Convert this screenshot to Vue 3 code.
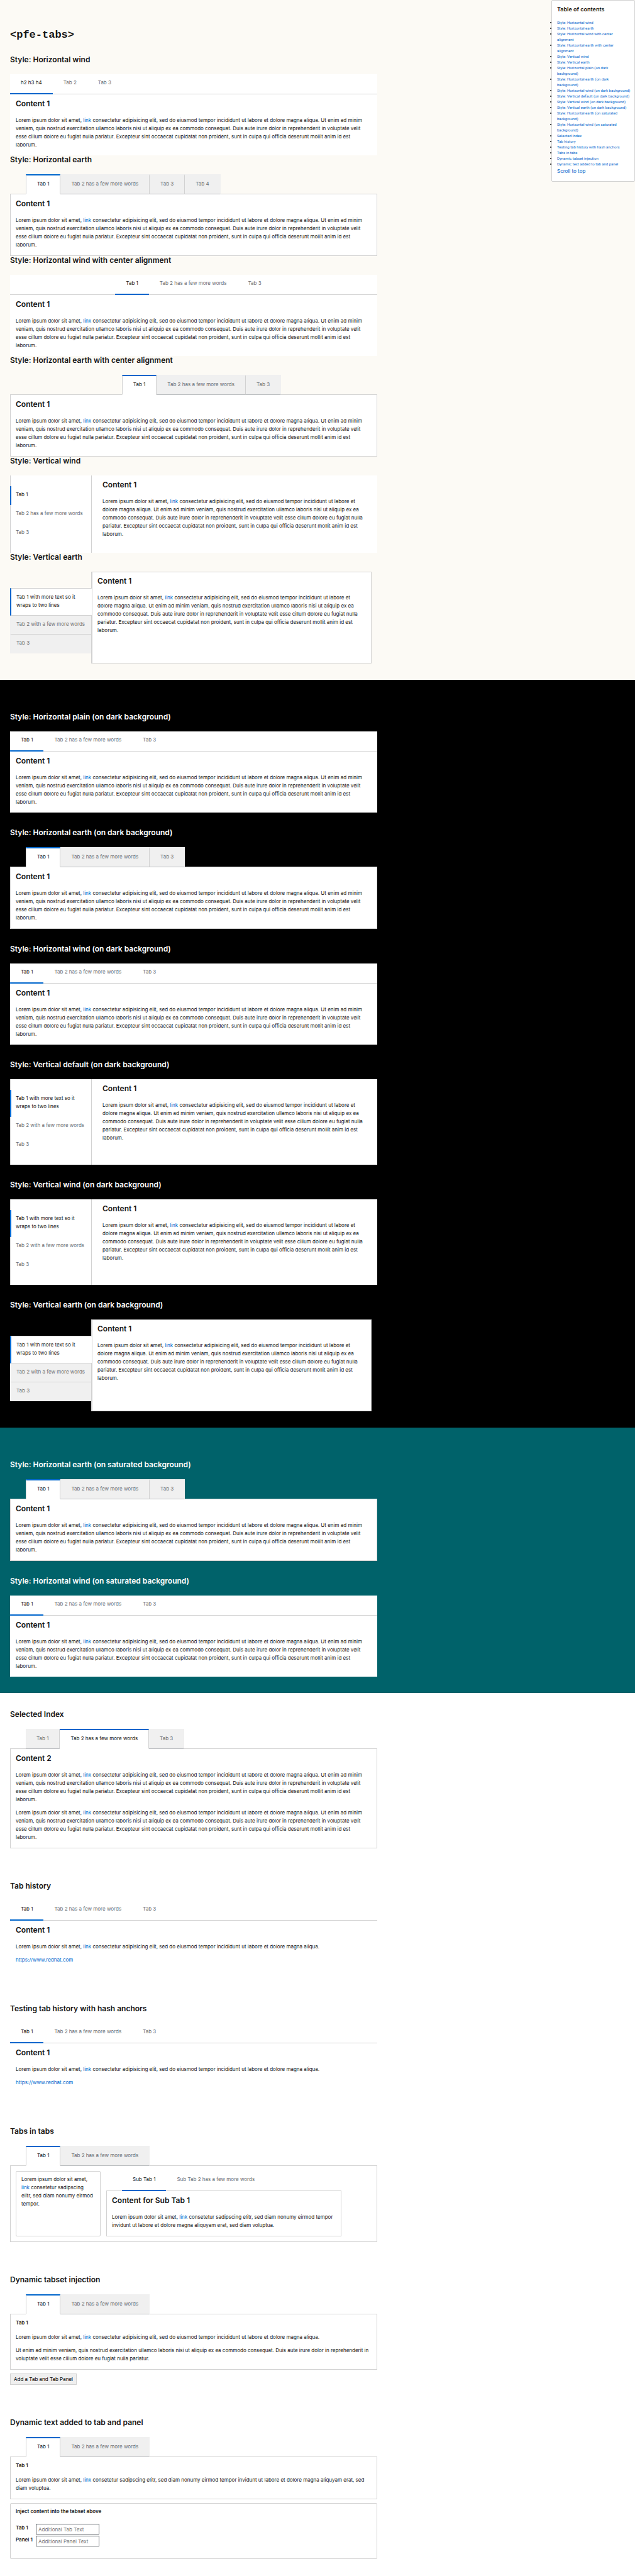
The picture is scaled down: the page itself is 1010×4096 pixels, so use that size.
<script setup>
const few = 'Tab 2 has a few more words'
const horizontal = ['Tab 1', few, 'Tab 3']
const vertical = ['Tab 1 with more text so it wraps to two lines', 'Tab 2 with a few more words', 'Tab 3']

const tail = 'consectetur adipisicing elit, sed do eiusmod tempor incididunt ut labore et dolore magna aliqua.'
const long = tail + ' Ut enim ad minim veniam, quis nostrud exercitation ullamco laboris nisi ut aliquip ex ea commodo consequat. Duis aute irure dolor in reprehenderit in voluptate velit esse cillum dolore eu fugiat nulla pariatur. Excepteur sint occaecat cupidatat non proident, sunt in culpa qui officia deserunt mollit anim id est laborum.'

const demo = (title, look, tabs, extra = {}) => ({
  title, look, tabs, active: 0, heading: 'Content 1', paragraphs: [long], ...extra
})

const bands = [
  {
    tone: 'light',
    demos: [
      demo('Style: Horizontal wind', 'wind', ['h2 h3 h4', 'Tab 2', 'Tab 3']),
      demo('Style: Horizontal earth', 'earth', [...horizontal, 'Tab 4']),
      demo('Style: Horizontal wind with center alignment', 'wind center', horizontal),
      demo('Style: Horizontal earth with center alignment', 'earth center', horizontal),
      demo('Style: Vertical wind', 'vertical wind', horizontal),
      demo('Style: Vertical earth', 'vertical earth', vertical)
    ]
  },
  {
    tone: 'dark',
    demos: [
      demo('Style: Horizontal plain (on dark background)', 'wind', horizontal),
      demo('Style: Horizontal earth (on dark background)', 'earth', horizontal),
      demo('Style: Horizontal wind (on dark background)', 'wind', horizontal),
      demo('Style: Vertical default (on dark background)', 'vertical wind', vertical),
      demo('Style: Vertical wind (on dark background)', 'vertical wind', vertical),
      demo('Style: Vertical earth (on dark background)', 'vertical earth', vertical)
    ]
  },
  {
    tone: 'saturated',
    demos: [
      demo('Style: Horizontal earth (on saturated background)', 'earth', horizontal),
      demo('Style: Horizontal wind (on saturated background)', 'wind', horizontal)
    ]
  },
  {
    tone: 'plain',
    demos: [
      demo('Selected Index', 'earth', horizontal, { active: 1, heading: 'Content 2', paragraphs: [long, long] }),
      demo('Tab history', 'wind history', horizontal, { paragraphs: [tail], url: true }),
      demo('Testing tab history with hash anchors', 'wind history', horizontal, { paragraphs: [tail], url: true })
    ]
  }
]

const slug = (text) => text.toLowerCase().replace(/[^a-z0-9]+/g, '-').replace(/-$/, '')

const contents = [
  ...bands.flatMap((band) => band.demos.map((d) => d.title)),
  'Tabs in tabs',
  'Dynamic tabset injection',
  'Dynamic text added to tab and panel'
].map((title) => ({
  title,
  wraps: /center alignment|saturated|Horizontal (plain|earth) \(/.test(title)
}))
</script>

<template>
  <div id="top" class="page">
    <nav class="toc" aria-labelledby="toc-title">
      <h2 id="toc-title" class="toc-title">Table of contents</h2>
      <ul class="toc-list">
        <li v-for="item in contents" :key="item.title" :class="{ single: !item.wraps }">
          <a :href="'#' + slug(item.title)">{{ item.title }}</a>
        </li>
      </ul>
      <a class="toc-top" href="#top">Scroll to top</a>
    </nav>

    <main>
      <section v-for="band in bands" :key="band.tone" class="band" :class="band.tone">
        <h1 v-if="band.tone === 'light'" class="title">&lt;pfe-tabs&gt;</h1>
        <article v-for="d in band.demos" :key="d.title" class="demo">
          <h2 :id="slug(d.title)" class="heading">{{ d.title }}</h2>
          <div class="tabset" :class="d.look">
            <div class="tabs" role="tablist">
              <button
                v-for="(tab, i) in d.tabs"
                :key="tab"
                type="button"
                role="tab"
                class="tab"
                :class="{ active: i === d.active }"
                :aria-selected="i === d.active"
              >{{ tab }}</button>
            </div>
            <div class="panel" role="tabpanel">
              <h3 class="panel-title">{{ d.heading }}</h3>
              <p v-for="(text, i) in d.paragraphs" :key="i">Lorem ipsum dolor sit amet, <a href="#top">link</a> {{ text }}</p>
              <p v-if="d.url"><a href="https://www.redhat.com">https://www.redhat.com</a></p>
            </div>
          </div>
        </article>

        <template v-if="band.tone === 'plain'">
          <article class="demo">
            <h2 id="tabs-in-tabs" class="heading">Tabs in tabs</h2>
            <div class="tabset earth">
              <div class="tabs" role="tablist">
                <button type="button" role="tab" class="tab active" aria-selected="true">Tab 1</button>
                <button type="button" role="tab" class="tab" aria-selected="false">{{ few }}</button>
              </div>
              <div class="panel nest" role="tabpanel">
                <div class="card side">
                  <p>Lorem ipsum dolor sit amet, <a href="#top">link</a> consetetur sadipscing elitr, sed diam nonumy eirmod tempor.</p>
                </div>
                <div class="tabset sub">
                  <div class="tabs" role="tablist">
                    <button type="button" role="tab" class="tab active" aria-selected="true">Sub Tab 1</button>
                    <button type="button" role="tab" class="tab" aria-selected="false">Sub Tab 2 has a few more words</button>
                  </div>
                  <div class="panel" role="tabpanel">
                    <h3 class="panel-title">Content for Sub Tab 1</h3>
                    <p>Lorem ipsum dolor sit amet, <a href="#top">link</a> consetetur sadipscing elitr, sed diam nonumy eirmod tempor invidunt ut labore et dolore magna aliquyam erat, sed diam voluptua.</p>
                  </div>
                </div>
              </div>
            </div>
          </article>

          <article class="demo">
            <h2 id="dynamic-tabset-injection" class="heading">Dynamic tabset injection</h2>
            <div class="tabset earth">
              <div class="tabs" role="tablist">
                <button type="button" role="tab" class="tab active" aria-selected="true">Tab 1</button>
                <button type="button" role="tab" class="tab" aria-selected="false">{{ few }}</button>
              </div>
              <div class="panel compact" role="tabpanel">
                <h3 class="small-title">Tab 1</h3>
                <p>Lorem ipsum dolor sit amet, <a href="#top">link</a> {{ tail }}</p>
                <p>Ut enim ad minim veniam, quis nostrud exercitation ullamco laboris nisi ut aliquip ex ea commodo consequat. Duis aute irure dolor in reprehenderit in voluptate velit esse cillum dolore eu fugiat nulla pariatur.</p>
              </div>
            </div>
            <button type="button" class="add">Add a Tab and Tab Panel</button>
          </article>

          <article class="demo">
            <h2 id="dynamic-text-added-to-tab-and-panel" class="heading">Dynamic text added to tab and panel</h2>
            <div class="tabset earth">
              <div class="tabs" role="tablist">
                <button type="button" role="tab" class="tab active" aria-selected="true">Tab 1</button>
                <button type="button" role="tab" class="tab" aria-selected="false">{{ few }}</button>
              </div>
              <div class="panel compact" role="tabpanel">
                <h3 class="small-title">Tab 1</h3>
                <p>Lorem ipsum dolor sit amet, <a href="#top">link</a> consetetur sadipscing elitr, sed diam nonumy eirmod tempor invidunt ut labore et dolore magna aliquyam erat, sed diam voluptua.</p>
              </div>
            </div>
            <form class="card inject" @submit.prevent>
              <h3 class="small-title">Inject content into the tabset above</h3>
              <div class="fields">
                <label for="tab-text">Tab 1</label>
                <input id="tab-text" type="text" placeholder="Additional Tab Text">
                <label for="panel-text">Panel 1</label>
                <input id="panel-text" type="text" placeholder="Additional Panel Text">
              </div>
            </form>
          </article>
        </template>
      </section>
    </main>
  </div>
</template>

<style>
body {
  margin: 0;
  background: #fff;
}
</style>

<style scoped>
* {
  box-sizing: border-box;
}

.page {
  position: relative;
  font-family: Inter, "Open Sans", sans-serif;
  font-size: 8px;
  line-height: 13px;
  color: #151515;
}

h1,
h2,
h3,
p,
ul {
  margin: 0;
}

a {
  color: #06c;
  text-decoration: none;
}

/* Table of contents */
.toc {
  position: absolute;
  top: 0;
  right: 0;
  z-index: 1;
  width: 133px;
  padding: 8px 9px 10px 8px;
  border: 1px solid #d2d2d2;
  border-radius: 2px;
  background: #fff;
}

.toc-title {
  margin-bottom: 10px;
  font-size: 9px;
  line-height: 12px;
  font-weight: 600;
}

.toc-list {
  padding: 0;
  margin-bottom: 1px;
  font-family: Roboto, sans-serif;
  font-size: 6px;
  line-height: 9px;
}

.single {
  white-space: nowrap;
}

.toc-top {
  display: block;
  line-height: 12px;
}

/* Bands */
.band {
  display: flex;
  flex-direction: column;
  gap: 25px;
  padding: 52px 16px 26px;
}

.light {
  gap: 0;
  padding-top: 46px;
  background: #fcfaf5;
}

.dark {
  background: #000;
}

.saturated {
  background: #00626a;
}

.plain {
  gap: 53px;
  padding-top: 27px;
  padding-bottom: 27px;
}

.title {
  margin-bottom: 22px;
  font-family: "Liberation Mono", monospace;
  font-size: 17px;
  line-height: 20px;
  font-weight: 700;
}

.heading {
  margin-bottom: 16px;
  font-size: 12px;
  line-height: 14px;
  font-weight: 600;
}

.dark .heading,
.saturated .heading {
  color: #fff;
}

/* Tabs */
.tabset {
  max-width: 584px;
}

.wind {
  background: #fff;
}

.tabs {
  display: flex;
  height: 32px;
  border-bottom: 1px solid #d2d2d2;
}

.tab {
  height: 32px;
  margin: 0;
  padding: 7px 17px 0;
  border: 0 solid #d2d2d2;
  background: none;
  font: inherit;
  color: #6a6e73;
  display: block;
  text-align: left;
}

.wind:not(.vertical) .tab,
.sub .tab {
  border-bottom: 2px solid transparent;
  padding-bottom: 10px;
}

.wind:not(.vertical) .tab.active,
.sub .tab.active {
  border-bottom-color: #06c;
}

.tab.active {
  color: #151515;
}

.earth > .tabs,
.sub > .tabs {
  padding-left: 25px;
}

.center > .tabs {
  justify-content: center;
}

.earth:not(.vertical) > .tabs > .tab {
  padding-bottom: 9px;
  border-top: 2px solid #f0f0f0;
  border-right: 1px solid #d2d2d2;
  border-bottom: 1px solid #b8bbbe;
  background: #f0f0f0;
}

.earth:not(.vertical) > .tabs > .tab:last-child {
  border-right-color: #f0f0f0;
}

.earth:not(.vertical) > .tabs > .tab.active {
  border-top-color: #06c;
  border-bottom-color: #fff;
  background: #fff;
}

.earth:not(.vertical) > .tabs > .tab.active:first-child {
  border-left: 1px solid #d2d2d2;
}

/* Panels */
.panel {
  padding: 8px 16px 10px 9px;
}

.earth > .panel,
.sub > .panel {
  padding-left: 8px;
  border: 1px solid #d2d2d2;
  border-top: 0;
  background: #fff;
}

.sub > .panel {
  padding-right: 8px;
}

.panel-title {
  margin-bottom: 13px;
  font-size: 12px;
  line-height: 14px;
  font-weight: 600;
}

p + p {
  margin-top: 8px;
}

.history > .panel {
  padding-bottom: 11px;
}

.earth > .compact {
  padding-top: 7px;
  padding-right: 8px;
}

.small-title {
  margin-bottom: 11px;
  font-size: 8px;
  line-height: 12px;
  font-weight: 600;
}

/* Vertical tabs */
.vertical {
  display: flex;
}

.vertical > .tabs {
  flex: none;
  flex-direction: column;
  width: 130px;
  height: auto;
  padding: 17px 0 16px;
  border: 0;
  border-right: 1px solid #d2d2d2;
}

.vertical.wind > .tabs {
  border-left: 1px solid #d2d2d2;
}

.vertical .tab {
  height: auto;
  padding: 7px 6px 10px 7px;
  border-left: 2px solid transparent;
}

.vertical.wind .tab {
  margin-left: -1px;
}

.vertical .tab.active {
  border-left-color: #06c;
}

.vertical > .panel {
  flex: 1;
  padding: 8px 16px 8px 17px;
}

.vertical.earth {
  max-width: 575px;
}

.vertical.earth > .tabs {
  padding-top: 26px;
}

.vertical.earth .tab {
  padding: 7px 6px 9px 8px;
  border-left-color: #f0f0f0;
  border-bottom: 1px solid #d2d2d2;
  background: #f0f0f0;
}

.vertical.earth .tab:last-child {
  border-bottom-color: #f0f0f0;
}

.vertical.earth .tab.active {
  margin-right: -1px;
  border-top: 1px solid #d2d2d2;
  border-left-color: #06c;
  background: #fff;
}

.vertical.earth > .panel {
  padding: 7px 16px 8px 8px;
  border: 1px solid #d2d2d2;
}

/* Cards, nested tabs and form */
.card {
  padding: 6px 8px;
  border: 1px solid #d2d2d2;
  border-radius: 2px;
}

.earth > .nest {
  display: flex;
  gap: 9px;
  padding: 8px;
}

.side {
  flex: none;
  width: 135px;
}

.sub {
  flex: 0 1 374px;
}

.add {
  display: block;
  height: 18px;
  margin: 6px 0 0;
  padding: 0 5px;
  border: 1px solid #d2d2d2;
  background: #efefef;
  font: inherit;
  color: #000;
}

.inject {
  max-width: 584px;
  margin-top: 6px;
  padding-bottom: 19px;
}

.inject .small-title {
  margin-bottom: 14px;
}

.fields {
  display: grid;
  grid-template-columns: 32px 101px;
  row-gap: 2px;
  font-weight: 600;
}

.fields input {
  width: 100%;
  height: 17px;
  margin: 0;
  padding: 0 3px;
  border: 1px solid #6a6e73;
  border-radius: 0;
  background: #fff;
  font: inherit;
  font-weight: 400;
}

.fields input::placeholder {
  color: #757575;
  opacity: 1;
}
</style>
